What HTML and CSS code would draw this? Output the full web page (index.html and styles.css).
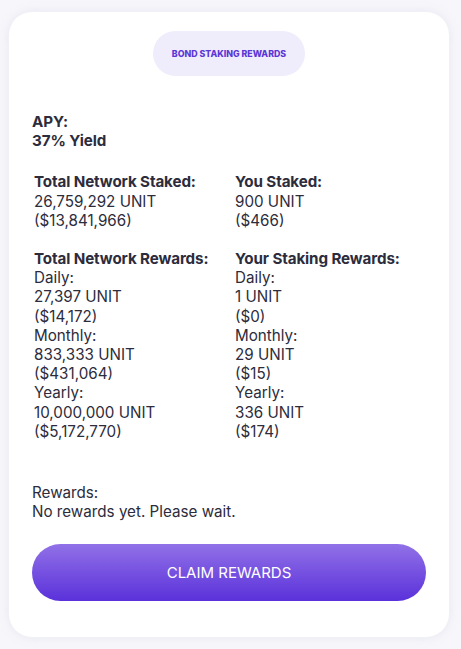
FILE: index.html
```html
<!DOCTYPE html>
<html>
<head>
<meta charset="utf-8">
<link rel="stylesheet" href="styles.css">
</head>
<body>
<div class="card">
  <div class="pill-wrap"><div class="pill">BOND STAKING REWARDS</div></div>
  <div class="apy">
    <div class="b">APY:</div>
    <div class="b">37% Yield</div>
  </div>
  <div class="grid">
    <div class="cell">
      <div class="b">Total Network Staked:</div>
      <div>26,759,292 UNIT</div>
      <div>($13,841,966)</div>
    </div>
    <div class="cell">
      <div class="b">You Staked:</div>
      <div>900 UNIT</div>
      <div>($466)</div>
    </div>
    <div class="cell">
      <div class="b">Total Network Rewards:</div>
      <div>Daily:</div>
      <div>27,397 UNIT</div>
      <div>($14,172)</div>
      <div>Monthly:</div>
      <div>833,333 UNIT</div>
      <div>($431,064)</div>
      <div>Yearly:</div>
      <div>10,000,000 UNIT</div>
      <div>($5,172,770)</div>
    </div>
    <div class="cell">
      <div class="b">Your Staking Rewards:</div>
      <div>Daily:</div>
      <div>1 UNIT</div>
      <div>($0)</div>
      <div>Monthly:</div>
      <div>29 UNIT</div>
      <div>($15)</div>
      <div>Yearly:</div>
      <div>336 UNIT</div>
      <div>($174)</div>
    </div>
  </div>
  <div class="rewards">
    <div>Rewards:</div>
    <div>No rewards yet. Please wait.</div>
  </div>
  <button class="claim">CLAIM REWARDS</button>
</div>
</body>
</html>
```
FILE: styles.css
```css
html, body {
  margin: 0;
  padding: 0;
  background: #f7f7fb;
}
body {
  padding: 11px 11px 12px 8px;
  font-family: "Inter", "Noto Sans", sans-serif;
  color: #2c2c3c;
  font-size: 15.2px;
  line-height: 19.2px;
}
.card {
  width: 442px;
  box-sizing: border-box;
  background: #fff;
  border-radius: 24px;
  box-shadow: 0 0 12px rgba(120, 120, 170, 0.12);
  border: 1px solid #f0f0f6;
  padding: 19px 23px 36px 23px;
}
.pill-wrap {
  display: flex;
  justify-content: center;
}
.pill {
  width: 152px;
  height: 45px;
  border-radius: 23px;
  background: #efecfb;
  color: #5b37d6;
  font-size: 8.8px;
  font-weight: 800;
  display: flex;
  align-items: center;
  justify-content: center;
}
.b {
  font-weight: 700;
  letter-spacing: -0.12px;
}
.apy {
  margin-top: 36px;
}
.grid {
  margin-top: 22px;
  margin-left: 2px;
  display: grid;
  grid-template-columns: 201px 1fr;
  row-gap: 19px;
}
.rewards {
  margin-top: 42px;
}
.claim {
  margin-top: 23px;
  width: 100%;
  height: 57px;
  border: none;
  border-radius: 29px;
  background: linear-gradient(180deg, #9171e7 0%, #5a31da 100%);
  color: #fff;
  font-family: inherit;
  font-size: 15px;
  display: block;
}
```
